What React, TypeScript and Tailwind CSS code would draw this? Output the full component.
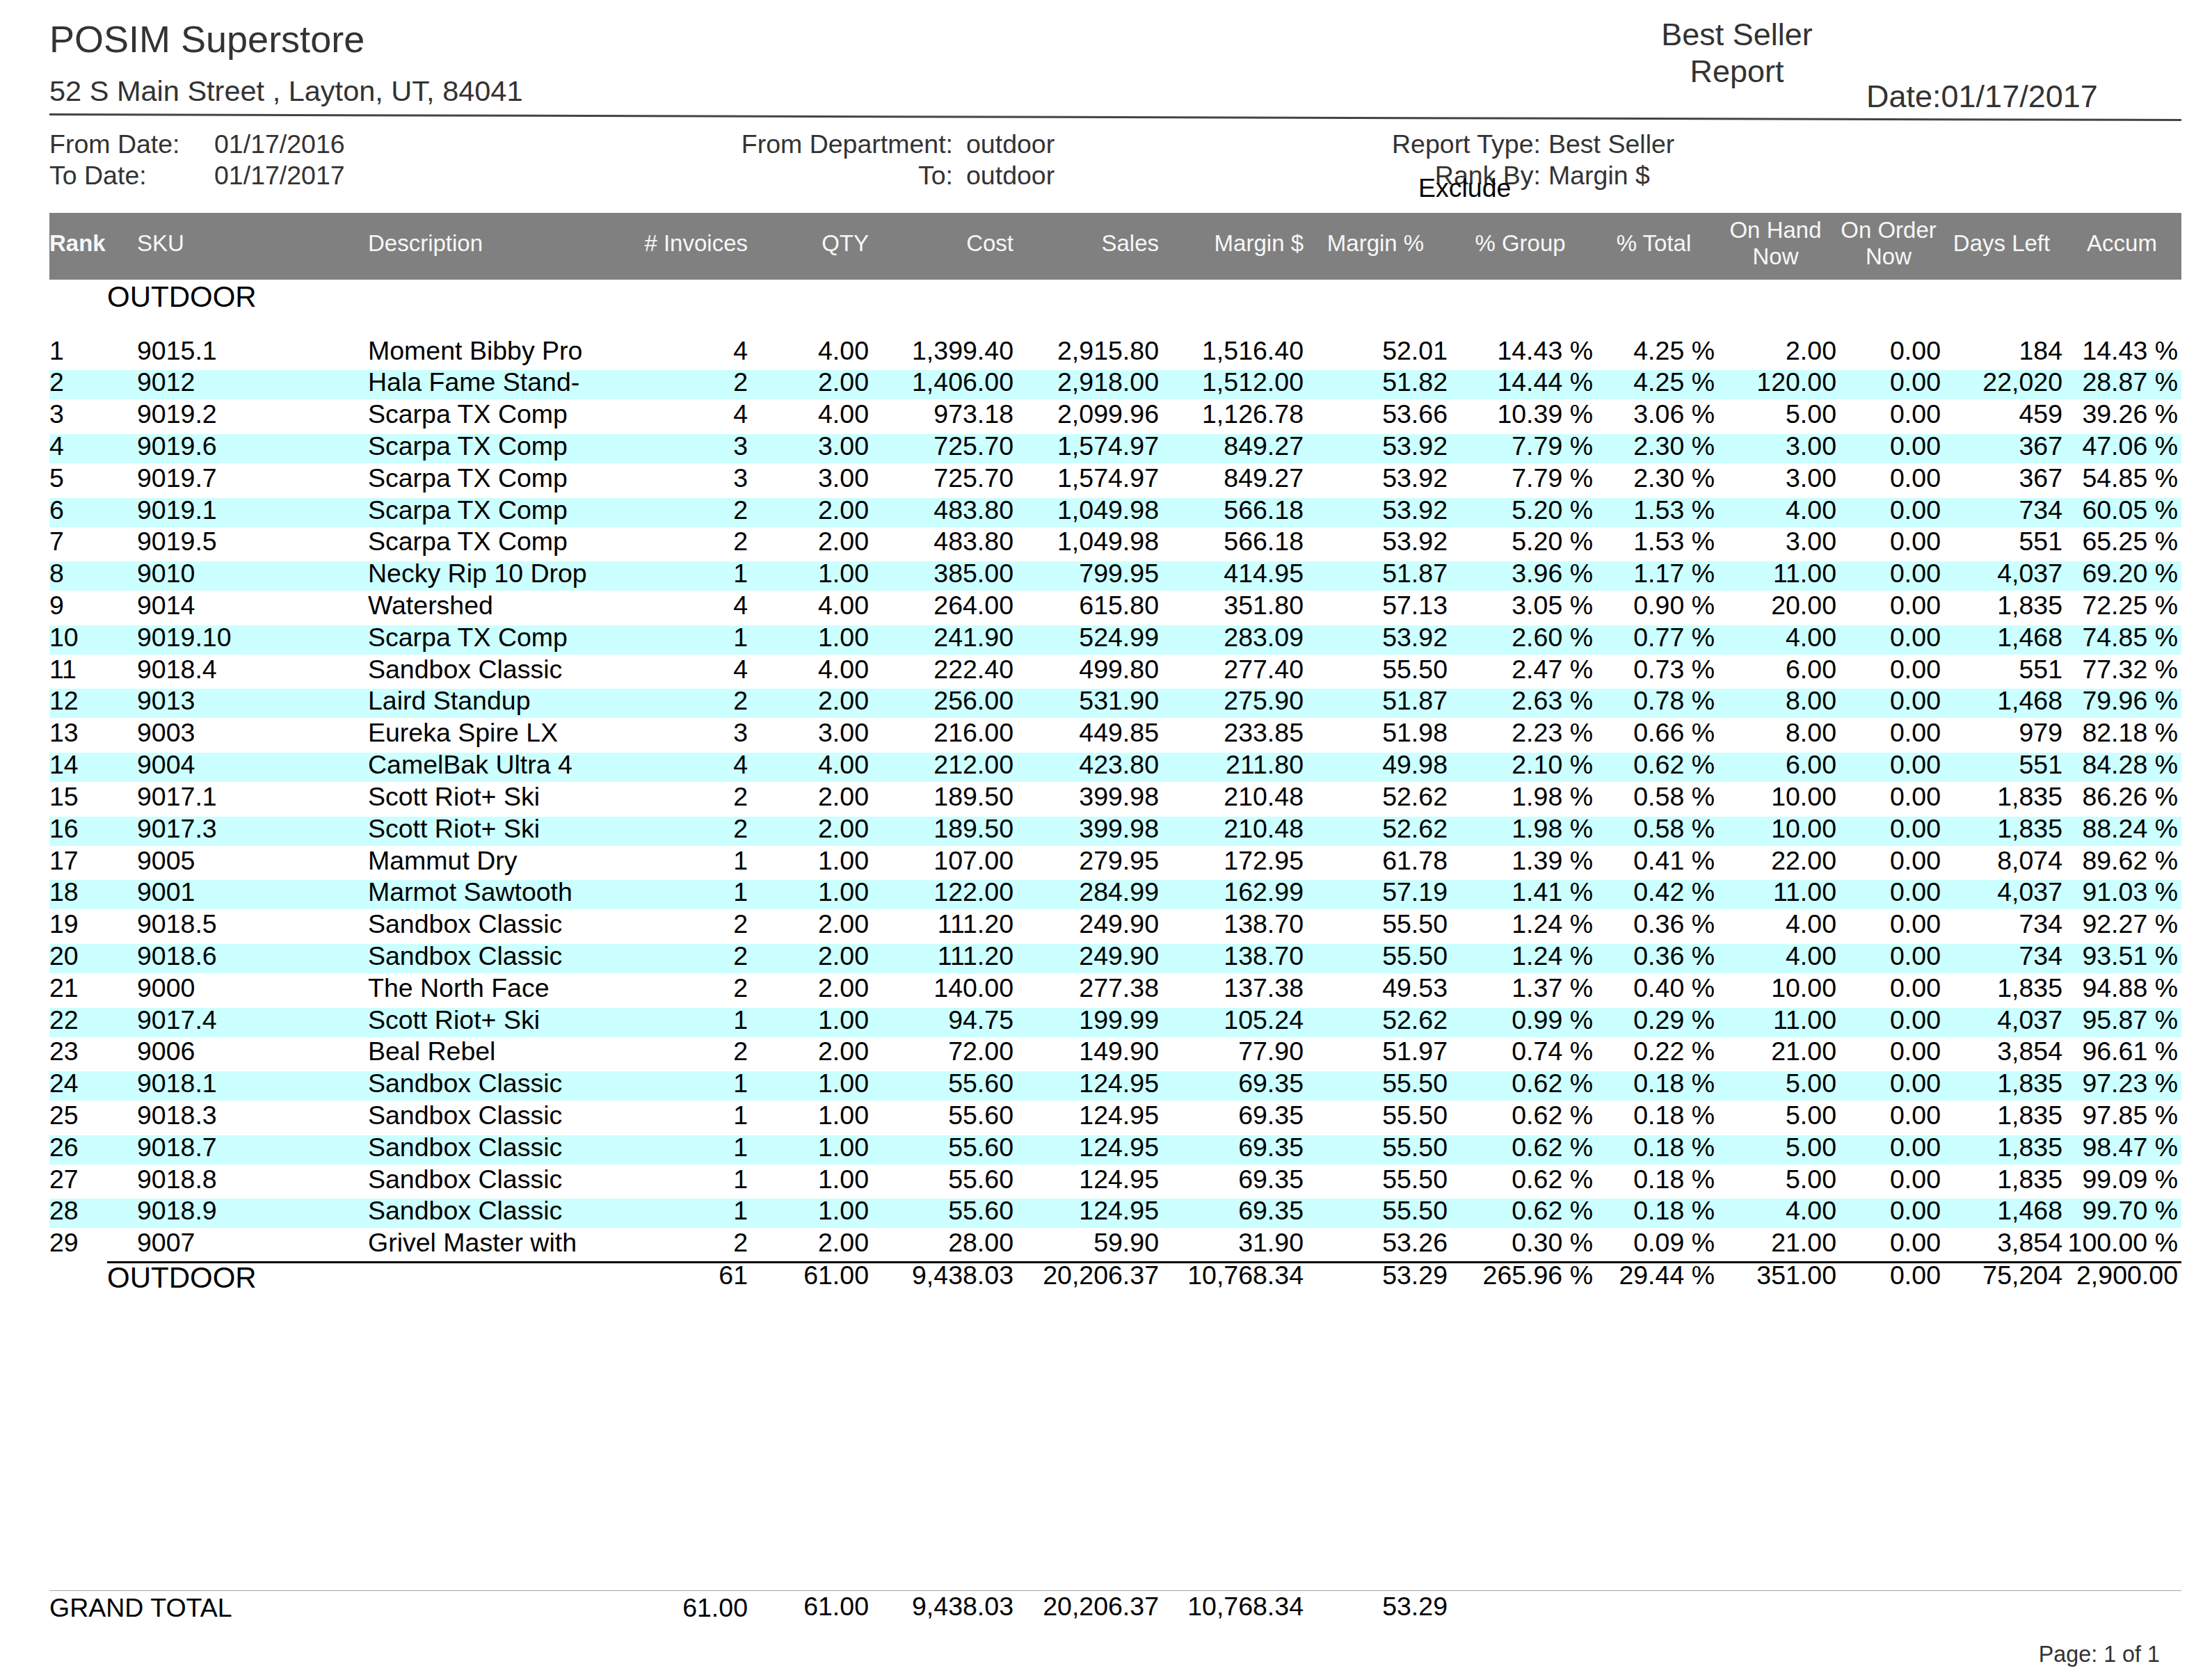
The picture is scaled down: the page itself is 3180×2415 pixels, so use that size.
import React from "react";

type Row = [string, string, string, string, string, string, string, string, string, string, string, string, string, string, string];

const rows: Row[] = [
  ["1", "9015.1", "Moment Bibby Pro", "4", "4.00", "1,399.40", "2,915.80", "1,516.40", "52.01", "14.43 %", "4.25 %", "2.00", "0.00", "184", "14.43 %"],
  ["2", "9012", "Hala Fame Stand-", "2", "2.00", "1,406.00", "2,918.00", "1,512.00", "51.82", "14.44 %", "4.25 %", "120.00", "0.00", "22,020", "28.87 %"],
  ["3", "9019.2", "Scarpa TX Comp", "4", "4.00", "973.18", "2,099.96", "1,126.78", "53.66", "10.39 %", "3.06 %", "5.00", "0.00", "459", "39.26 %"],
  ["4", "9019.6", "Scarpa TX Comp", "3", "3.00", "725.70", "1,574.97", "849.27", "53.92", "7.79 %", "2.30 %", "3.00", "0.00", "367", "47.06 %"],
  ["5", "9019.7", "Scarpa TX Comp", "3", "3.00", "725.70", "1,574.97", "849.27", "53.92", "7.79 %", "2.30 %", "3.00", "0.00", "367", "54.85 %"],
  ["6", "9019.1", "Scarpa TX Comp", "2", "2.00", "483.80", "1,049.98", "566.18", "53.92", "5.20 %", "1.53 %", "4.00", "0.00", "734", "60.05 %"],
  ["7", "9019.5", "Scarpa TX Comp", "2", "2.00", "483.80", "1,049.98", "566.18", "53.92", "5.20 %", "1.53 %", "3.00", "0.00", "551", "65.25 %"],
  ["8", "9010", "Necky Rip 10 Drop", "1", "1.00", "385.00", "799.95", "414.95", "51.87", "3.96 %", "1.17 %", "11.00", "0.00", "4,037", "69.20 %"],
  ["9", "9014", "Watershed", "4", "4.00", "264.00", "615.80", "351.80", "57.13", "3.05 %", "0.90 %", "20.00", "0.00", "1,835", "72.25 %"],
  ["10", "9019.10", "Scarpa TX Comp", "1", "1.00", "241.90", "524.99", "283.09", "53.92", "2.60 %", "0.77 %", "4.00", "0.00", "1,468", "74.85 %"],
  ["11", "9018.4", "Sandbox Classic", "4", "4.00", "222.40", "499.80", "277.40", "55.50", "2.47 %", "0.73 %", "6.00", "0.00", "551", "77.32 %"],
  ["12", "9013", "Laird Standup", "2", "2.00", "256.00", "531.90", "275.90", "51.87", "2.63 %", "0.78 %", "8.00", "0.00", "1,468", "79.96 %"],
  ["13", "9003", "Eureka Spire LX", "3", "3.00", "216.00", "449.85", "233.85", "51.98", "2.23 %", "0.66 %", "8.00", "0.00", "979", "82.18 %"],
  ["14", "9004", "CamelBak Ultra 4", "4", "4.00", "212.00", "423.80", "211.80", "49.98", "2.10 %", "0.62 %", "6.00", "0.00", "551", "84.28 %"],
  ["15", "9017.1", "Scott Riot+ Ski", "2", "2.00", "189.50", "399.98", "210.48", "52.62", "1.98 %", "0.58 %", "10.00", "0.00", "1,835", "86.26 %"],
  ["16", "9017.3", "Scott Riot+ Ski", "2", "2.00", "189.50", "399.98", "210.48", "52.62", "1.98 %", "0.58 %", "10.00", "0.00", "1,835", "88.24 %"],
  ["17", "9005", "Mammut Dry", "1", "1.00", "107.00", "279.95", "172.95", "61.78", "1.39 %", "0.41 %", "22.00", "0.00", "8,074", "89.62 %"],
  ["18", "9001", "Marmot Sawtooth", "1", "1.00", "122.00", "284.99", "162.99", "57.19", "1.41 %", "0.42 %", "11.00", "0.00", "4,037", "91.03 %"],
  ["19", "9018.5", "Sandbox Classic", "2", "2.00", "111.20", "249.90", "138.70", "55.50", "1.24 %", "0.36 %", "4.00", "0.00", "734", "92.27 %"],
  ["20", "9018.6", "Sandbox Classic", "2", "2.00", "111.20", "249.90", "138.70", "55.50", "1.24 %", "0.36 %", "4.00", "0.00", "734", "93.51 %"],
  ["21", "9000", "The North Face", "2", "2.00", "140.00", "277.38", "137.38", "49.53", "1.37 %", "0.40 %", "10.00", "0.00", "1,835", "94.88 %"],
  ["22", "9017.4", "Scott Riot+ Ski", "1", "1.00", "94.75", "199.99", "105.24", "52.62", "0.99 %", "0.29 %", "11.00", "0.00", "4,037", "95.87 %"],
  ["23", "9006", "Beal Rebel", "2", "2.00", "72.00", "149.90", "77.90", "51.97", "0.74 %", "0.22 %", "21.00", "0.00", "3,854", "96.61 %"],
  ["24", "9018.1", "Sandbox Classic", "1", "1.00", "55.60", "124.95", "69.35", "55.50", "0.62 %", "0.18 %", "5.00", "0.00", "1,835", "97.23 %"],
  ["25", "9018.3", "Sandbox Classic", "1", "1.00", "55.60", "124.95", "69.35", "55.50", "0.62 %", "0.18 %", "5.00", "0.00", "1,835", "97.85 %"],
  ["26", "9018.7", "Sandbox Classic", "1", "1.00", "55.60", "124.95", "69.35", "55.50", "0.62 %", "0.18 %", "5.00", "0.00", "1,835", "98.47 %"],
  ["27", "9018.8", "Sandbox Classic", "1", "1.00", "55.60", "124.95", "69.35", "55.50", "0.62 %", "0.18 %", "5.00", "0.00", "1,835", "99.09 %"],
  ["28", "9018.9", "Sandbox Classic", "1", "1.00", "55.60", "124.95", "69.35", "55.50", "0.62 %", "0.18 %", "4.00", "0.00", "1,468", "99.70 %"],
  ["29", "9007", "Grivel Master with", "2", "2.00", "28.00", "59.90", "31.90", "53.26", "0.30 %", "0.09 %", "21.00", "0.00", "3,854", "100.00 %"],
];

const COLS =
  "grid grid-cols-[126px_332px_396px_150px_174px_208px_209px_208px_207px_209px_175px_175px_150px_175px_171px]";

function DataRow({ r, band }: { r: Row; band: boolean }) {
  return (
    <div className="h-[45.82px] pt-[2px]">
      <div
        className={`${COLS} h-[42px] whitespace-nowrap text-[37.5px] leading-[34px] text-black ${
          band ? "bg-[#ccffff]" : ""
        }`}
      >
        <div>{r[0]}</div>
        <div>{r[1]}</div>
        <div>{r[2]}</div>
        <div className="text-right">{r[3]}</div>
        <div className="text-right">{r[4]}</div>
        <div className="text-right">{r[5]}</div>
        <div className="text-right">{r[6]}</div>
        <div className="text-right">{r[7]}</div>
        <div className="text-right">{r[8]}</div>
        <div className="text-right">{r[9]}</div>
        <div className="text-right">{r[10]}</div>
        <div className="text-right">{r[11]}</div>
        <div className="text-right">{r[12]}</div>
        <div className="text-right">{r[13]}</div>
        <div className="pr-[5px] text-right">{r[14]}</div>
      </div>
    </div>
  );
}

export default function App() {
  return (
    <div className="min-h-[2415px] w-[3180px] bg-white pl-[71px] font-['Liberation_Sans',Arial,sans-serif]">
      <div className="w-[3065px]">
        {/* Top header */}
        <div className="flex h-[163px] items-start text-[#333333]">
          <div className="w-[2276px]">
            <div className="mt-[29px] whitespace-nowrap text-[54px] leading-[54px]">POSIM Superstore</div>
            <div className="mt-[27px] whitespace-nowrap text-[41.5px] leading-[41px]">
              52 S Main Street , Layton, UT, 84041
            </div>
          </div>
          <div className="mt-[23px] w-[300px] text-center text-[45px] leading-[53px]">
            Best Seller
            <br />
            Report
          </div>
          <div className="ml-[36px] mt-[116px] whitespace-nowrap text-[45px] leading-[45px]">Date:01/17/2017</div>
        </div>
        <div className="h-[3px] origin-left rotate-[0.15deg] bg-[#444444]" />

        {/* Info block */}
        <div className="relative mt-[19px] flex h-[90px] whitespace-nowrap text-[37.5px] leading-[45px] text-[#333333]">
          <div className="grid w-[900px] grid-cols-[237px_1fr] content-start">
            <div>From Date:</div>
            <div>01/17/2016</div>
            <div>To Date:</div>
            <div>01/17/2017</div>
          </div>
          <div className="grid w-[1000px] grid-cols-[399px_1fr] content-start gap-x-[19px]">
            <div className="text-right">From Department:</div>
            <div>outdoor</div>
            <div className="text-right">To:</div>
            <div>outdoor</div>
          </div>
          <div className="grid grid-cols-[244px_1fr] content-start gap-x-[11px]">
            <div className="text-right">Report Type:</div>
            <div>Best Seller</div>
            <div className="text-right">Rank By:</div>
            <div>Margin $</div>
          </div>
          <div className="absolute left-[1968px] top-[63px] text-black">Exclude</div>
        </div>

        {/* Column header bar */}
        <div
          className={`${COLS} mt-[30.5px] h-[96px] items-center bg-[#808080] pb-2 text-[33px] leading-[38px] text-[#f7f7f7] whitespace-nowrap`}
        >
          <div className="font-bold">Rank</div>
          <div>SKU</div>
          <div>Description</div>
          <div className="text-right"># Invoices</div>
          <div className="text-right">QTY</div>
          <div className="text-right">Cost</div>
          <div className="text-right">Sales</div>
          <div className="text-right">Margin $</div>
          <div className="text-center">Margin %</div>
          <div className="text-center">% Group</div>
          <div className="text-center">% Total</div>
          <div className="text-center">
            On Hand
            <br />
            Now
          </div>
          <div className="text-center">
            On Order
            <br />
            Now
          </div>
          <div className="text-center">Days Left</div>
          <div className="text-center">Accum</div>
        </div>

        {/* Group label */}
        <div className="ml-[83px] mt-[4px] text-[42px] leading-[42px] text-black">OUTDOOR</div>

        {/* Rows */}
        <div className="mt-[37px]">
          {rows.map((r, i) => (
            <DataRow key={r[0]} r={r} band={i % 2 === 1} />
          ))}
        </div>

        {/* Group total */}
        <div className="ml-[83px] grid grid-cols-[771px_150px_174px_208px_209px_208px_207px_209px_175px_175px_150px_175px_171px] items-start whitespace-nowrap border-t-[3px] border-black text-[37.5px] leading-[34px] text-black">
          <div className="text-[42px] leading-[42px]">OUTDOOR</div>
          <div className="text-right">61</div>
          <div className="text-right">61.00</div>
          <div className="text-right">9,438.03</div>
          <div className="text-right">20,206.37</div>
          <div className="text-right">10,768.34</div>
          <div className="text-right">53.29</div>
          <div className="text-right">265.96 %</div>
          <div className="text-right">29.44 %</div>
          <div className="text-right">351.00</div>
          <div className="text-right">0.00</div>
          <div className="text-right">75,204</div>
          <div className="pr-[5px] text-right">2,900.00</div>
        </div>

        {/* Grand total */}
        <div className="mt-[428px] h-px bg-[#a8a8a8]" />
        <div className="grid grid-cols-[854px_150px_174px_208px_209px_208px_207px] items-start whitespace-nowrap pt-[3px] text-[37.5px] leading-[38px] text-black">
          <div className="leading-[42px]">GRAND TOTAL</div>
          <div className="text-right leading-[42px]">61.00</div>
          <div className="text-right">61.00</div>
          <div className="text-right">9,438.03</div>
          <div className="text-right">20,206.37</div>
          <div className="text-right">10,768.34</div>
          <div className="text-right">53.29</div>
        </div>

        {/* Footer */}
        <div className="mt-[30px] pr-[31px] text-right text-[32.3px] leading-[32px] text-[#333333]">Page: 1 of 1</div>
      </div>
    </div>
  );
}
